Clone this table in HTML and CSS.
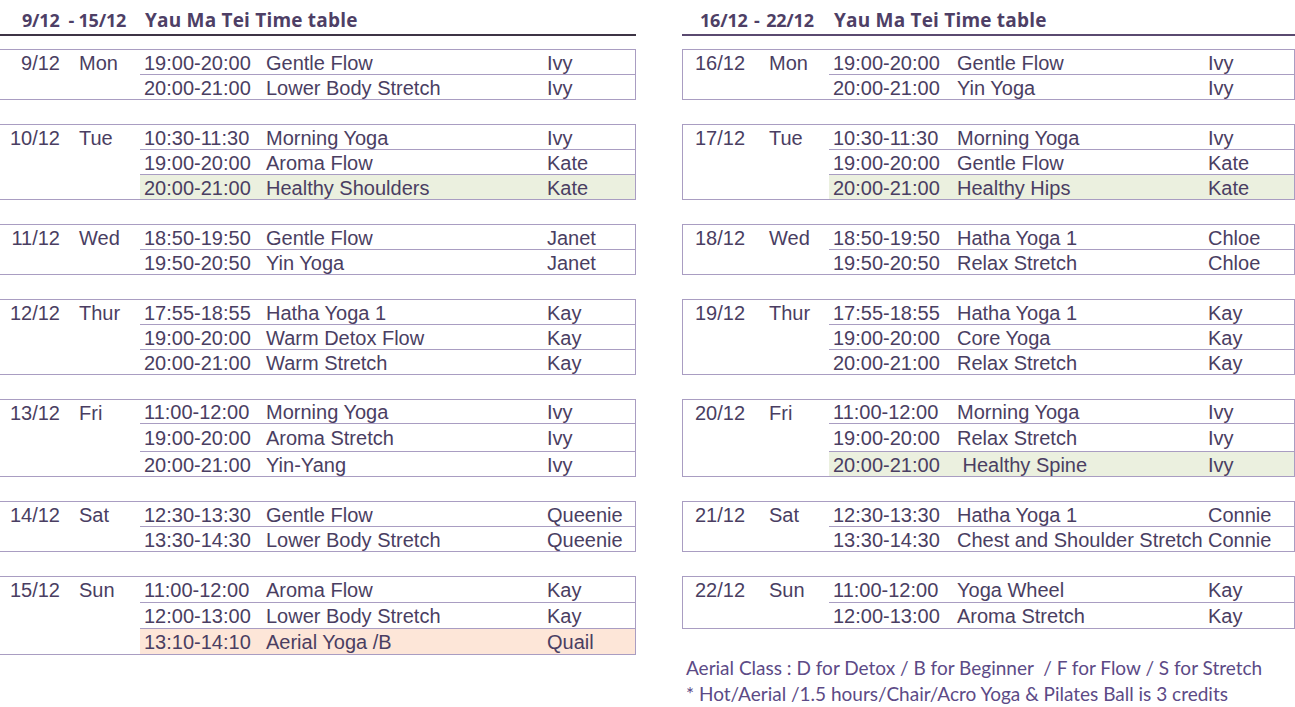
FILE: index.html
```html
<!DOCTYPE html>
<html lang="en">
<head>
<meta charset="utf-8">
<title>Yau Ma Tei Time table</title>
<link rel="stylesheet" href="styles.css">
</head>
<body>
<div class="page">
  <section class="week week-left">
    <header class="week-head"><span class="range">9/12&nbsp; - 15/12</span><span class="title">Yau Ma Tei Time table</span></header>
    <div class="day first">
      <div class="day-label"><span class="date">9/12</span><span class="dow">Mon</span></div>
      <div class="slots">
        <div class="slot"><span class="time">19:00-20:00</span><span class="cls">Gentle Flow</span><span class="who">Ivy</span></div>
        <div class="slot"><span class="time">20:00-21:00</span><span class="cls">Lower Body Stretch</span><span class="who">Ivy</span></div>
      </div>
    </div>
    <div class="day">
      <div class="day-label"><span class="date">10/12</span><span class="dow">Tue</span></div>
      <div class="slots">
        <div class="slot"><span class="time">10:30-11:30</span><span class="cls">Morning Yoga</span><span class="who">Ivy</span></div>
        <div class="slot"><span class="time">19:00-20:00</span><span class="cls">Aroma Flow</span><span class="who">Kate</span></div>
        <div class="slot green"><span class="time">20:00-21:00</span><span class="cls">Healthy Shoulders</span><span class="who">Kate</span></div>
      </div>
    </div>
    <div class="day">
      <div class="day-label"><span class="date">11/12</span><span class="dow">Wed</span></div>
      <div class="slots">
        <div class="slot"><span class="time">18:50-19:50</span><span class="cls">Gentle Flow</span><span class="who">Janet</span></div>
        <div class="slot"><span class="time">19:50-20:50</span><span class="cls">Yin Yoga</span><span class="who">Janet</span></div>
      </div>
    </div>
    <div class="day">
      <div class="day-label"><span class="date">12/12</span><span class="dow">Thur</span></div>
      <div class="slots">
        <div class="slot"><span class="time">17:55-18:55</span><span class="cls">Hatha Yoga 1</span><span class="who">Kay</span></div>
        <div class="slot"><span class="time">19:00-20:00</span><span class="cls">Warm Detox Flow</span><span class="who">Kay</span></div>
        <div class="slot"><span class="time">20:00-21:00</span><span class="cls">Warm Stretch</span><span class="who">Kay</span></div>
      </div>
    </div>
    <div class="day fri">
      <div class="day-label"><span class="date">13/12</span><span class="dow">Fri</span></div>
      <div class="slots">
        <div class="slot"><span class="time">11:00-12:00</span><span class="cls">Morning Yoga</span><span class="who">Ivy</span></div>
        <div class="slot"><span class="time">19:00-20:00</span><span class="cls">Aroma Stretch</span><span class="who">Ivy</span></div>
        <div class="slot"><span class="time">20:00-21:00</span><span class="cls">Yin-Yang</span><span class="who">Ivy</span></div>
      </div>
    </div>
    <div class="day">
      <div class="day-label"><span class="date">14/12</span><span class="dow">Sat</span></div>
      <div class="slots">
        <div class="slot"><span class="time">12:30-13:30</span><span class="cls">Gentle Flow</span><span class="who">Queenie</span></div>
        <div class="slot"><span class="time">13:30-14:30</span><span class="cls">Lower Body Stretch</span><span class="who">Queenie</span></div>
      </div>
    </div>
    <div class="day loose">
      <div class="day-label"><span class="date">15/12</span><span class="dow">Sun</span></div>
      <div class="slots">
        <div class="slot"><span class="time">11:00-12:00</span><span class="cls">Aroma Flow</span><span class="who">Kay</span></div>
        <div class="slot"><span class="time">12:00-13:00</span><span class="cls">Lower Body Stretch</span><span class="who">Kay</span></div>
        <div class="slot peach"><span class="time">13:10-14:10</span><span class="cls">Aerial Yoga /B</span><span class="who">Quail</span></div>
      </div>
    </div>
  </section>

  <section class="week week-right">
    <header class="week-head"><span class="range">16/12 - 22/12</span><span class="title">Yau Ma Tei Time table</span></header>
    <div class="day first">
      <div class="day-label"><span class="date">16/12</span><span class="dow">Mon</span></div>
      <div class="slots">
        <div class="slot"><span class="time">19:00-20:00</span><span class="cls">Gentle Flow</span><span class="who">Ivy</span></div>
        <div class="slot"><span class="time">20:00-21:00</span><span class="cls">Yin Yoga</span><span class="who">Ivy</span></div>
      </div>
    </div>
    <div class="day">
      <div class="day-label"><span class="date">17/12</span><span class="dow">Tue</span></div>
      <div class="slots">
        <div class="slot"><span class="time">10:30-11:30</span><span class="cls">Morning Yoga</span><span class="who">Ivy</span></div>
        <div class="slot"><span class="time">19:00-20:00</span><span class="cls">Gentle Flow</span><span class="who">Kate</span></div>
        <div class="slot green"><span class="time">20:00-21:00</span><span class="cls">Healthy Hips</span><span class="who">Kate</span></div>
      </div>
    </div>
    <div class="day">
      <div class="day-label"><span class="date">18/12</span><span class="dow">Wed</span></div>
      <div class="slots">
        <div class="slot"><span class="time">18:50-19:50</span><span class="cls">Hatha Yoga 1</span><span class="who">Chloe</span></div>
        <div class="slot"><span class="time">19:50-20:50</span><span class="cls">Relax Stretch</span><span class="who">Chloe</span></div>
      </div>
    </div>
    <div class="day">
      <div class="day-label"><span class="date">19/12</span><span class="dow">Thur</span></div>
      <div class="slots">
        <div class="slot"><span class="time">17:55-18:55</span><span class="cls">Hatha Yoga 1</span><span class="who">Kay</span></div>
        <div class="slot"><span class="time">19:00-20:00</span><span class="cls">Core Yoga</span><span class="who">Kay</span></div>
        <div class="slot"><span class="time">20:00-21:00</span><span class="cls">Relax Stretch</span><span class="who">Kay</span></div>
      </div>
    </div>
    <div class="day fri">
      <div class="day-label"><span class="date">20/12</span><span class="dow">Fri</span></div>
      <div class="slots">
        <div class="slot"><span class="time">11:00-12:00</span><span class="cls">Morning Yoga</span><span class="who">Ivy</span></div>
        <div class="slot"><span class="time">19:00-20:00</span><span class="cls">Relax Stretch</span><span class="who">Ivy</span></div>
        <div class="slot green"><span class="time">20:00-21:00</span><span class="cls">&nbsp;Healthy Spine</span><span class="who">Ivy</span></div>
      </div>
    </div>
    <div class="day">
      <div class="day-label"><span class="date">21/12</span><span class="dow">Sat</span></div>
      <div class="slots">
        <div class="slot"><span class="time">12:30-13:30</span><span class="cls">Hatha Yoga 1</span><span class="who">Connie</span></div>
        <div class="slot"><span class="time">13:30-14:30</span><span class="cls">Chest and Shoulder Stretch</span><span class="who">Connie</span></div>
      </div>
    </div>
    <div class="day loose">
      <div class="day-label"><span class="date">22/12</span><span class="dow">Sun</span></div>
      <div class="slots">
        <div class="slot"><span class="time">11:00-12:00</span><span class="cls">Yoga Wheel</span><span class="who">Kay</span></div>
        <div class="slot"><span class="time">12:00-13:00</span><span class="cls">Aroma Stretch</span><span class="who">Kay</span></div>
      </div>
    </div>
    <div class="notes">
      <p>Aerial Class : D for Detox / B for Beginner&nbsp; / F for Flow / S for Stretch</p>
      <p>* Hot/Aerial /1.5 hours/Chair/Acro Yoga &amp; Pilates Ball is 3 credits</p>
    </div>
  </section>
</div>
</body>
</html>
```

FILE: styles.css
```css
* { box-sizing: border-box; }

html, body {
  margin: 0;
  padding: 0;
  background: #ffffff;
}

body {
  font-family: "Liberation Sans", Arial, sans-serif;
  font-size: 20px;
  color: #4a3e62;
  width: 1295px;
  height: 707px;
  overflow: hidden;
}

.page {
  display: flex;
  align-items: flex-start;
}

.week-left {
  width: 636px;
}

.week-right {
  width: 613px;
  margin-left: 46px;
}

/* header */
.week-head {
  display: flex;
  align-items: baseline;
  height: 36px;
  padding-top: 8px;
  line-height: 24px;
  border-bottom: 2px solid #3d3445;
  font-family: "Open Sans", "Lato", sans-serif;
  font-weight: 700;
  color: #4e3f66;
  white-space: pre;
}

.week-right .week-head {
  border-bottom-color: #5a4a70;
}

.range {
  font-size: 18px;
  letter-spacing: -0.2px;
  flex: none;
}

.title {
  font-size: 19px;
  letter-spacing: 0.2px;
}

.week-left .range {
  padding-left: 22px;
  width: 145px;
}

.week-right .range {
  padding-left: 18px;
  width: 152px;
}

.week-right .range {
  word-spacing: 2px;
}

/* day groups */
.day {
  display: flex;
  margin-top: 24px;
  border-top: 1px solid #a99dc2;
  border-bottom: 1px solid #a99dc2;
  border-right: 1px solid #a99dc2;
}

.day.first {
  margin-top: 13px;
}

.week-right .day {
  border-left: 1px solid #a99dc2;
}

.day-label {
  display: flex;
  line-height: 24px;
  padding-top: 1px;
  flex: none;
}

.week-left .day-label {
  width: 140px;
}

.week-left .date {
  width: 60px;
  text-align: right;
}

.week-left .dow {
  margin-left: 19px;
}

.week-right .day-label {
  width: 146px;
}

.week-right .date {
  width: 86px;
  padding-left: 12px;
}

.slots {
  flex: 1;
  display: flex;
  flex-direction: column;
}

.slot {
  display: flex;
  height: 24px;
  line-height: 24px;
  white-space: pre;
}

.slot + .slot {
  height: 25px;
  border-top: 1px solid #a99dc2;
}

.slot span {
  display: block;
  padding-top: 1px;
}

.time { padding-left: 4px; }
.cls { padding-left: 6px; }
.who { padding-left: 6px; }

.week-left .time { width: 120px; }
.week-left .cls { width: 281px; }
.week-right .time { width: 122px; }
.week-right .cls { width: 251px; }

.slot.green { background: #ebf0df; }
.slot.peach { background: #fde6d8; }

/* Friday rows have uneven heights */
.day.fri .slot:nth-child(1) { height: 23px; line-height: 23px; }
.day.fri .slot:nth-child(2) { height: 28px; line-height: 27px; }
.day.fri .slot:nth-child(3) { height: 25px; line-height: 24px; }

/* Sunday rows are a touch taller */
.day.loose .day-label { line-height: 25px; }
.day.loose .slot { height: 25px; line-height: 25px; }
.day.loose .slot + .slot { height: 26px; }

/* notes */
.notes {
  margin-top: 26px;
  padding-left: 4px;
  font-family: "Lato", "Open Sans", sans-serif;
  font-size: 19px;
  line-height: 26px;
  color: #5c4a86;
}

.notes p {
  margin: 0;
  white-space: pre;
}
```
